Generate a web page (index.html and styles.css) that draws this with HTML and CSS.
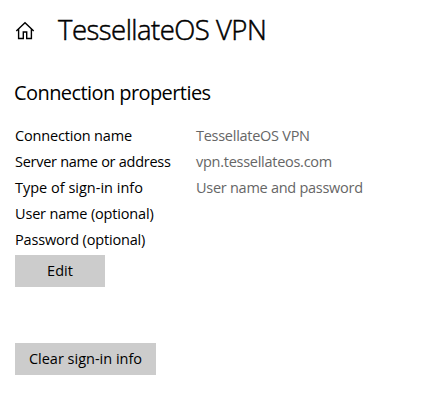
FILE: index.html
```html
<!DOCTYPE html>
<html lang="en">
<head>
<meta charset="utf-8">
<title>TessellateOS VPN</title>
<link rel="stylesheet" href="styles.css">
</head>
<body>
<main class="page">
  <header class="header">
    <svg class="home" viewBox="0 0 20 20" width="20" height="20"><path d="M1.300 11 10 2.700l8.700 8.300M3.600 9.200v9.300h4.700v-6.500h3.400v6.500h4.700V9.200"/></svg>
    <h1 class="title">TessellateOS VPN</h1>
  </header>
  <h2 class="subtitle">Connection properties</h2>
  <dl class="props">
    <dt>Connection name</dt><dd>TessellateOS VPN</dd>
    <dt class="tight">Server name or address</dt><dd>vpn.tessellateos.com</dd>
    <dt class="loose">Type of sign-in info</dt><dd>User name and password</dd>
    <dt>User name (optional)</dt><dd></dd>
    <dt>Password (optional)</dt><dd></dd>
  </dl>
  <button class="button edit">Edit</button>
  <button class="button clear">Clear sign-in info</button>
</main>
</body>
</html>
```
FILE: styles.css
```css
* { box-sizing: border-box; }
body { margin: 0; background: #fff; color: #000; font-family: "Open Sans", "Noto Sans", sans-serif; }
.page { padding: 10px 15px 0; }
.header { display: flex; align-items: center; height: 40px; }
.home { fill: none; stroke: #000; stroke-width: 1.4; }
.title { margin: 0 0 0 23px; font-size: 27.5px; font-weight: 300; line-height: 40px; letter-spacing: -0.52px; white-space: nowrap; -webkit-text-stroke: 0.5px #000; }
.subtitle { margin: 29px 0 0 -1px; font-size: 20px; font-weight: 400; line-height: 28px; letter-spacing: -0.58px; white-space: nowrap; }
.props { display: grid; grid-template-columns: 181px 1fr; grid-auto-rows: 26px; margin: 16px 0 0; font-size: 14.5px; line-height: 26px; letter-spacing: -0.17px; white-space: nowrap; }
.props dd { margin: 0; color: #666; letter-spacing: -0.27px; }
.props .tight { letter-spacing: -0.27px; }
.props .loose { letter-spacing: 0; }
.button { display: block; height: 32px; border: 0; padding: 0; background: #ccc; color: #000; font: 14.5px/32px "Open Sans", sans-serif; }
.edit { width: 90px; margin-top: 2px; }
.clear { width: 141px; margin-top: 56px; }
```
